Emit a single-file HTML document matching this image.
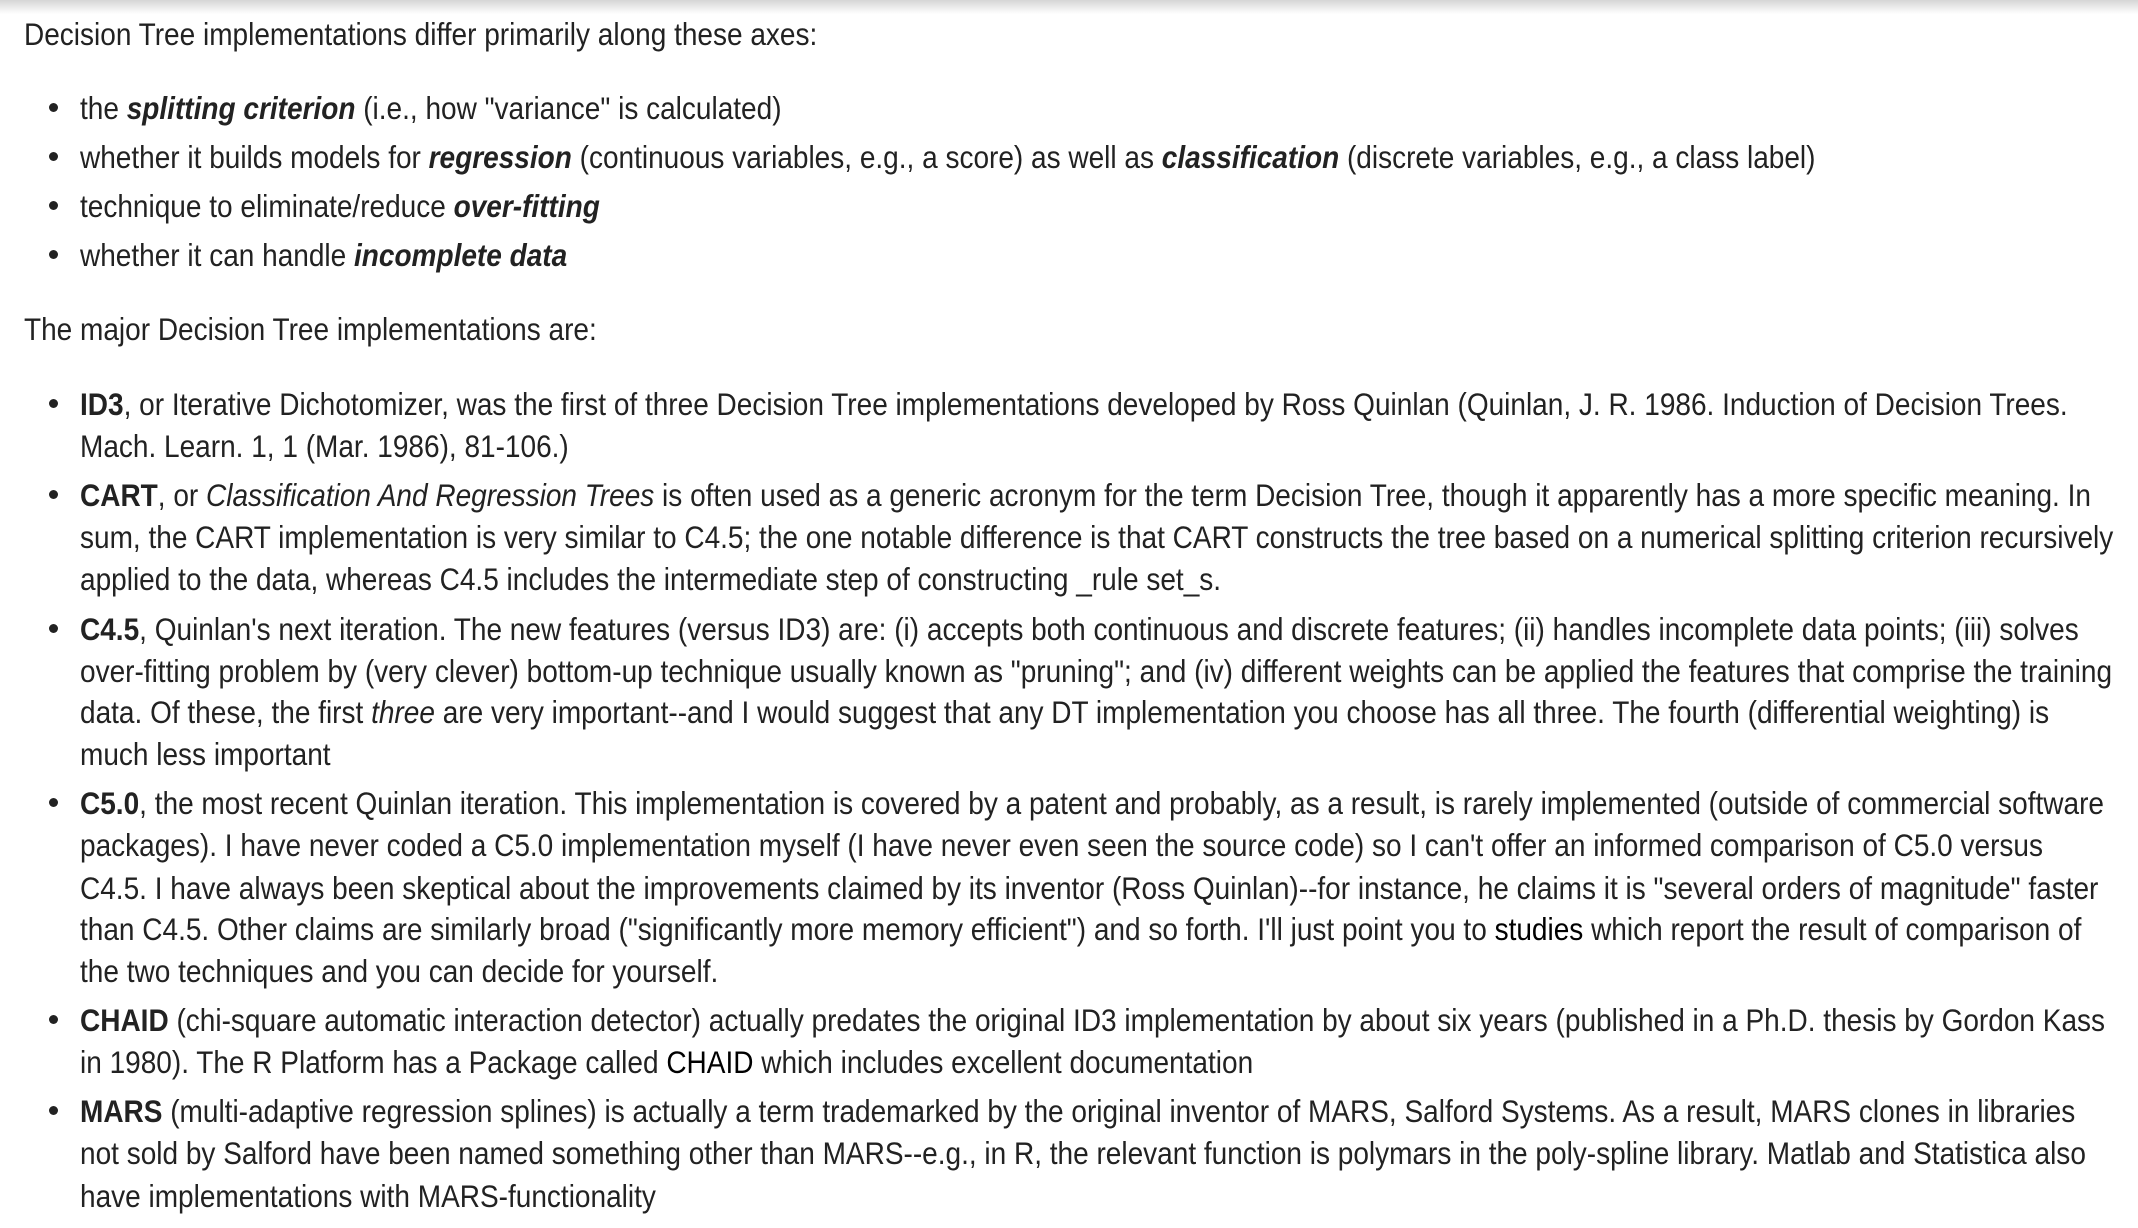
<!DOCTYPE html>
<html><head><meta charset="utf-8"><style>
html,body{margin:0;padding:0;width:2138px;height:1228px;background:#fff;overflow:hidden}
body{font-family:"Liberation Sans",Arial,sans-serif;color:#222;}
.sh{position:absolute;left:0;top:0;width:2138px;height:14px;background:linear-gradient(#d6d6d6,rgba(255,255,255,0))}
.l{position:absolute;white-space:nowrap;font-size:31.5px;line-height:42px;height:42px;transform:scaleX(0.889);transform-origin:0 50%}
.b{position:absolute;width:9px;height:9px;border-radius:50%;background:#222;left:49px}
</style></head><body>
<div class="sh"></div>
<div class="l" style="left:24px;top:13px">Decision Tree implementations differ primarily along these axes:</div>

<div class="b" style="top:103px"></div><div class="l" style="left:80px;top:87px">the <b><i>splitting criterion</i></b> (i.e., how "variance" is calculated)</div>
<div class="b" style="top:152px"></div><div class="l" style="left:80px;top:136px">whether it builds models for <b><i>regression</i></b> (continuous variables, e.g., a score) as well as <b><i>classification</i></b> (discrete variables, e.g., a class label)</div>
<div class="b" style="top:201px"></div><div class="l" style="left:80px;top:185px">technique to eliminate/reduce <b><i>over-fitting</i></b></div>
<div class="b" style="top:250px"></div><div class="l" style="left:80px;top:234px">whether it can handle <b><i>incomplete data</i></b></div>

<div class="l" style="left:24px;top:308px">The major Decision Tree implementations are:</div>

<div class="b" style="top:399px"></div>
<div class="l" style="left:80px;top:383px"><b>ID3</b>, or Iterative Dichotomizer, was the first of three Decision Tree implementations developed by Ross Quinlan (Quinlan, J. R. 1986. Induction of Decision Trees.</div>
<div class="l" style="left:80px;top:425px">Mach. Learn. 1, 1 (Mar. 1986), 81-106.)</div>

<div class="b" style="top:490px"></div>
<div class="l" style="left:80px;top:474px"><b>CART</b>, or <i>Classification And Regression Trees</i> is often used as a generic acronym for the term Decision Tree, though it apparently has a more specific meaning. In</div>
<div class="l" style="left:80px;top:516px">sum, the CART implementation is very similar to C4.5; the one notable difference is that CART constructs the tree based on a numerical splitting criterion recursively</div>
<div class="l" style="left:80px;top:558px">applied to the data, whereas C4.5 includes the intermediate step of constructing _rule set_s.</div>

<div class="b" style="top:624px"></div>
<div class="l" style="left:80px;top:608px"><b>C4.5</b>, Quinlan's next iteration. The new features (versus ID3) are: (i) accepts both continuous and discrete features; (ii) handles incomplete data points; (iii) solves</div>
<div class="l" style="left:80px;top:650px">over-fitting problem by (very clever) bottom-up technique usually known as "pruning"; and (iv) different weights can be applied the features that comprise the training</div>
<div class="l" style="left:80px;top:691px">data. Of these, the first <i>three</i> are very important--and I would suggest that any DT implementation you choose has all three. The fourth (differential weighting) is</div>
<div class="l" style="left:80px;top:733px">much less important</div>

<div class="b" style="top:798px"></div>
<div class="l" style="left:80px;top:782px"><b>C5.0</b>, the most recent Quinlan iteration. This implementation is covered by a patent and probably, as a result, is rarely implemented (outside of commercial software</div>
<div class="l" style="left:80px;top:824px">packages). I have never coded a C5.0 implementation myself (I have never even seen the source code) so I can't offer an informed comparison of C5.0 versus</div>
<div class="l" style="left:80px;top:867px">C4.5. I have always been skeptical about the improvements claimed by its inventor (Ross Quinlan)--for instance, he claims it is "several orders of magnitude" faster</div>
<div class="l" style="left:80px;top:908px">than C4.5. Other claims are similarly broad ("significantly more memory efficient") and so forth. I'll just point you to <span style="color:#000">studies</span> which report the result of comparison of</div>
<div class="l" style="left:80px;top:950px">the two techniques and you can decide for yourself.</div>

<div class="b" style="top:1015px"></div>
<div class="l" style="left:80px;top:999px"><b>CHAID</b> (chi-square automatic interaction detector) actually predates the original ID3 implementation by about six years (published in a Ph.D. thesis by Gordon Kass</div>
<div class="l" style="left:80px;top:1041px">in 1980). The R Platform has a Package called <span style="color:#000">CHAID</span> which includes excellent documentation</div>

<div class="b" style="top:1106px"></div>
<div class="l" style="left:80px;top:1090px"><b>MARS</b> (multi-adaptive regression splines) is actually a term trademarked by the original inventor of MARS, Salford Systems. As a result, MARS clones in libraries</div>
<div class="l" style="left:80px;top:1132px">not sold by Salford have been named something other than MARS--e.g., in R, the relevant function is polymars in the poly-spline library. Matlab and Statistica also</div>
<div class="l" style="left:80px;top:1175px">have implementations with MARS-functionality</div>
</body></html>
